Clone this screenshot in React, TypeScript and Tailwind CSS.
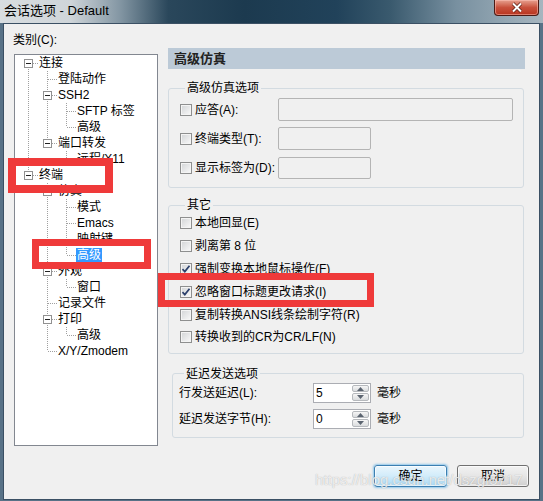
import React from 'react';

type T = { l: string; c?: T[]; sel?: boolean };
type Flat = { l: string; level: number; exp: boolean; last: boolean; anc: boolean[]; first: boolean; sel?: boolean };

const tree: T[] = [
  {
    l: '连接',
    c: [
      { l: '登陆动作' },
      { l: 'SSH2', c: [{ l: 'SFTP 标签' }, { l: '高级' }] },
      { l: '端口转发', c: [{ l: '远程/X11' }] },
    ],
  },
  {
    l: '终端',
    c: [
      { l: '仿真', c: [{ l: '模式' }, { l: 'Emacs' }, { l: '映射键' }, { l: '高级', sel: true }] },
      { l: '外观', c: [{ l: '窗口' }] },
      { l: '记录文件' },
      { l: '打印', c: [{ l: '高级' }] },
      { l: 'X/Y/Zmodem' },
    ],
  },
];

function flatten(nodes: T[], level: number, anc: boolean[], out: Flat[]): Flat[] {
  nodes.forEach((n, i) => {
    const last = i === nodes.length - 1;
    out.push({ l: n.l, level, exp: !!n.c, last, anc, first: level === 0 && i === 0, sel: n.sel });
    if (n.c) flatten(n.c, level + 1, [...anc, last], out);
  });
  return out;
}

const rows = flatten(tree, 0, [], []);
const DOT = '#a0a0a0';

function Guide({ show }: { show: boolean }) {
  return (
    <svg width="19" height="16" className="block shrink-0">
      {show && <line x1="9.5" y1="0" x2="9.5" y2="16" stroke={DOT} strokeDasharray="1 1" />}
    </svg>
  );
}

function Joint({ first, last, exp }: { first: boolean; last: boolean; exp: boolean }) {
  return (
    <svg width="19" height="16" className="block shrink-0">
      {!first && <line x1="9.5" y1="0" x2="9.5" y2="8" stroke={DOT} strokeDasharray="1 1" />}
      {!last && <line x1="9.5" y1="8" x2="9.5" y2="16" stroke={DOT} strokeDasharray="1 1" />}
      <line x1="10" y1="8.5" x2="19" y2="8.5" stroke={DOT} strokeDasharray="1 1" />
      {exp && (
        <>
          <rect x="5.5" y="4.5" width="8" height="8" fill="#fff" stroke="#919191" />
          <line x1="7" y1="8.5" x2="12" y2="8.5" stroke="#222" />
        </>
      )}
    </svg>
  );
}

function Check({ on }: { on?: boolean }) {
  return (
    <span className="flex h-[12px] w-[12px] shrink-0 items-center justify-center border border-[#8e8f8f] bg-linear-to-br from-[#d2d4d6] to-[#fafafa] shadow-[inset_0_0_0_1px_#f4f4f4]">
      {on && (
        <svg width="10" height="10" viewBox="0 0 10 10">
          <path d="M1.5 5.2 L3.8 7.6 L8.5 1.8" fill="none" stroke="#2b3f6b" strokeWidth="1.7" />
        </svg>
      )}
    </span>
  );
}

function CheckRow({ label, on }: { label: string; on?: boolean }) {
  return (
    <div className="flex h-[22.8px] items-center gap-[3px]">
      <Check on={on} />
      <span className="text-[12px] leading-[14px] text-black">{label}</span>
    </div>
  );
}

function Spin({ v }: { v: string }) {
  return (
    <div className="flex h-[20px] w-[58px] border border-[#abadb3] bg-white">
      <div className="flex-1 pl-[2px] text-[12px] leading-[18px] text-black">{v}</div>
      <div className="flex w-[18px] flex-col gap-[1px] py-[1px] pr-[1px]">
        <div className="flex flex-1 items-center justify-center rounded-[2px] border border-[#b6b9bd] bg-linear-to-b from-[#f6f6f6] to-[#dadcde]">
          <svg width="7" height="4"><path d="M0 4 L3.5 0 L7 4 Z" fill="#5b6470" /></svg>
        </div>
        <div className="flex flex-1 items-center justify-center rounded-[2px] border border-[#b6b9bd] bg-linear-to-b from-[#f6f6f6] to-[#dadcde]">
          <svg width="7" height="4"><path d="M0 0 L3.5 4 L7 0 Z" fill="#5b6470" /></svg>
        </div>
      </div>
    </div>
  );
}

export default function App() {
  return (
    <div className="relative h-[501px] w-[543px] overflow-hidden bg-[#587287] font-['Liberation_Sans','Noto_Sans_CJK_SC',sans-serif]">
      {/* title bar */}
      <div className="flex h-[23px] items-start bg-[linear-gradient(90deg,#d8dde0_0%,#cfd5d9_13%,#8497a4_22%,#2a475b_31%,#1c3a4f_45%,#21425a_62%,#3a5a6e_72%,#7890a0_84%,#93a6b2_93%,#a6b5bf_100%)]">
        <span className="ml-[4px] mt-[3px] text-[13px] leading-[16px] text-black">会话选项 - Default</span>
        <div className="ml-auto mr-[4px] flex h-[16px] w-[45px] items-center justify-center rounded-b-[4px] border border-t-0 border-[#4c1a14] bg-linear-to-b from-[#e6a090] via-[#c8503c] to-[#b8341e] shadow-[inset_0_0_0_1px_rgba(255,200,190,0.5)]">
          <svg width="12" height="11" viewBox="0 0 12 11">
            <path d="M2 1.5 L10 9.5 M10 1.5 L2 9.5" stroke="#5a1a10" strokeWidth="3.4" />
            <path d="M2 1.5 L10 9.5 M10 1.5 L2 9.5" stroke="#fff" strokeWidth="2" />
          </svg>
        </div>
      </div>

      {/* client */}
      <div className="mx-[3px] flex h-[477px] flex-col border border-[#3b5064] bg-[#f0f0f0] pl-[10px] pt-[8px]">
        <div className="flex">
          {/* left */}
          <div className="flex w-[144px] flex-col">
            <div className="-ml-[1px] h-[16px] text-[12px] leading-[16px] text-black">类别(C):</div>
            <div className="mt-[6px] h-[392px] border border-[#828790] bg-white pl-[4px]">
              {rows.map((r, i) => (
                <div key={i} className="flex h-[16px] items-center">
                  {r.anc.map((a, j) => (
                    <Guide key={j} show={!a} />
                  ))}
                  <Joint first={r.first} last={r.last} exp={r.exp} />
                  <span
                    className={
                      'whitespace-nowrap px-[1px] text-[12px] leading-[15px] ' +
                      (r.sel ? 'bg-[#3399ff] text-white' : 'text-black')
                    }
                  >
                    {r.l}
                  </span>
                </div>
              ))}
            </div>
          </div>

          {/* right */}
          <div className="ml-[10px] mt-[16px] flex w-[357px] flex-col">
            <div className="flex h-[21px] items-center bg-[#bccad7] pl-[6px] text-[13px] font-bold leading-[16px] text-[#222]">
              高级仿真
            </div>

            <fieldset className="mt-[12px] w-[356px] rounded-[3px] border border-[#d3dbe1] pb-[8px] pl-[11px] pt-[3px]">
              <legend className="ml-[5px] px-[2px] text-[12px] leading-[14px] text-black">高级仿真选项</legend>
              <div className="flex flex-col gap-[6px]">
                <div className="flex h-[23px] items-center">
                  <div className="flex w-[98px] items-center gap-[3px]">
                    <Check />
                    <span className="text-[12px] leading-[14px]">应答(A):</span>
                  </div>
                  <div className="h-[23px] w-[235px] rounded-[2px] border border-[#b4b4b4] bg-[#f0f0f0]" />
                </div>
                <div className="flex h-[23px] items-center">
                  <div className="flex w-[98px] items-center gap-[3px]">
                    <Check />
                    <span className="text-[12px] leading-[14px]">终端类型(T):</span>
                  </div>
                  <div className="h-[23px] w-[93px] rounded-[2px] border border-[#b4b4b4] bg-[#f0f0f0]" />
                </div>
                <div className="flex h-[23px] items-center">
                  <div className="flex w-[98px] items-center gap-[3px]">
                    <Check />
                    <span className="whitespace-nowrap text-[12px] leading-[14px]">显示标签为(D):</span>
                  </div>
                  <div className="h-[22px] w-[93px] rounded-[2px] border border-[#b4b4b4] bg-[#f0f0f0]" />
                </div>
              </div>
            </fieldset>

            <fieldset className="mt-[10px] w-[356px] rounded-[3px] border border-[#d3dbe1] pb-[4px] pl-[11px]">
              <legend className="ml-[5px] px-[2px] text-[12px] leading-[14px] text-black">其它</legend>
              <CheckRow label="本地回显(E)" />
              <CheckRow label="剥离第 8 位" />
              <CheckRow label="强制变换本地鼠标操作(F)" on />
              <CheckRow label="忽略窗口标题更改请求(I)" on />
              <CheckRow label="复制转换ANSI线条绘制字符(R)" />
              <CheckRow label="转换收到的CR为CR/LF(N)" />
            </fieldset>

            <fieldset className="ml-[4px] mt-[13px] w-[352px] rounded-[3px] border border-[#d3dbe1] pb-[8px] pl-[6px] pt-[2px]">
              <legend className="ml-[5px] px-[2px] text-[12px] leading-[14px] text-black">延迟发送选项</legend>
              <div className="flex flex-col gap-[6px]">
                <div className="flex h-[20px] items-center">
                  <span className="w-[134px] text-[12px] leading-[14px] text-black">行发送延迟(L):</span>
                  <Spin v="5" />
                  <span className="ml-[6px] text-[12px] leading-[14px] text-black">毫秒</span>
                </div>
                <div className="flex h-[20px] items-center">
                  <span className="w-[134px] text-[12px] leading-[14px] text-black">延迟发送字节(H):</span>
                  <Spin v="0" />
                  <span className="ml-[6px] text-[12px] leading-[14px] text-black">毫秒</span>
                </div>
              </div>
            </fieldset>
          </div>
        </div>

        {/* buttons */}
        <div className="mt-[19px] flex justify-end gap-[10px] pr-[10px]">
          <div className="flex h-[22px] w-[73px] items-center justify-center rounded-[3px] border border-[#3c7fb1] bg-linear-to-b from-[#eaf6fd] via-[#d2ecfa] to-[#a9daf5] text-[12px] leading-[14px] text-black shadow-[0_0_2px_1px_rgba(80,170,230,0.6),inset_0_0_0_1px_rgba(255,255,255,0.7)]">
            确定
          </div>
          <div className="flex h-[22px] w-[72px] items-center justify-center rounded-[3px] border border-[#707070] bg-linear-to-b from-[#f2f2f2] via-[#e6e6e6] to-[#cfcfcf] text-[12px] leading-[14px] text-black shadow-[inset_0_0_0_1px_rgba(255,255,255,0.7)]">
            取消
          </div>
        </div>
      </div>

      {/* watermark */}
      <div className="pointer-events-none absolute left-[315px] top-[471px] whitespace-nowrap text-[15px] leading-[18px] text-white/75 [text-shadow:0_0_1px_rgba(120,120,120,0.6)]">
        https://blog.csdn.net/dszgf5717
      </div>

      {/* annotation boxes */}
      <div className="pointer-events-none absolute left-[8px] top-[158px] h-[35px] w-[105px] border-[8px] border-[#ef3a3a]" />
      <div className="pointer-events-none absolute left-[32px] top-[239px] h-[30px] w-[119px] border-[7px] border-[#ef3a3a]" />
      <div className="pointer-events-none absolute left-[158px] top-[273px] h-[34px] w-[216px] border-[7px] border-[#ef3a3a]" />
    </div>
  );
}
